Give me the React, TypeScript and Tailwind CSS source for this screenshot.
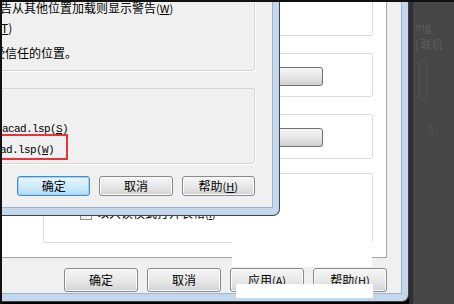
import React from 'react';

const cjk = "font-['Noto_Sans_CJK_SC',sans-serif]";

const Btn: React.FC<{ children: React.ReactNode; def?: boolean; tall?: boolean }> = ({ children, def, tall }) => (
  <div
    className={`flex items-center justify-center w-[74px] ${tall ? 'h-[24px]' : 'h-[20px]'} rounded-[3px] border text-[12px] leading-none text-black ${
      def
        ? 'border-[#3c8fd0] bg-linear-to-b from-[#eaf6fd] via-[#d0ebfa] to-[#b2dcf4] shadow-[inset_0_0_0_1px_#9fd3f2]'
        : 'border-[#8a8a8a] bg-linear-to-b from-[#f5f5f5] via-[#e9e9e9] to-[#d3d3d3] shadow-[inset_0_0_0_1px_#fbfbfb]'
    }`}
  >
    {children}
  </div>
);

const Mn: React.FC<{ k: string }> = ({ k }) => (
  <span className="text-[11px]">
    (<span className="underline">{k}</span>)
  </span>
);

export default function App() {
  return (
    <div className={`relative w-[454px] h-[304px] overflow-hidden bg-black ${cjk}`}>
      {/* desktop behind */}
      <div className="absolute left-[409px] top-0 w-[45px] h-[304px] bg-[#464646] flex">
        <div className="w-[4px] h-full bg-[#2f2f2f]" />
        <div className="flex-1 flex flex-col pl-[2px] pt-[18px] text-[11px] text-[#5e5e5e] leading-[16px]">
          <span>ing</span>
          <span className="mt-[2px]">| 联机</span>
          <div className="mt-[8px] ml-[4px] w-[8px] h-[40px] rounded-[2px] border border-[#525252]" />
          <span className="mt-[22px] ml-[12px] text-[10px]">①</span>
        </div>
      </div>

      {/* back dialog (options) */}
      <div className="absolute left-0 top-0 w-[409px] h-[302px] rounded-br-[7px] bg-[#c4d7ec] border-r border-b border-[#3b4450]">
        <div className="w-[402px] h-[294px] bg-[#f0f0f0] border-r border-b border-[#9fb4ca] flex flex-col">
          <div className="w-[387px] h-[258px] bg-white border-r border-b border-[#a5a5a5] flex flex-col pl-[43px]">
            <div className="-mt-[20px] w-[330px] h-[56px] rounded-[3px] border border-[#dadada]" />
            <div className="mt-[17px] w-[330px] h-[44px] rounded-[3px] border border-[#dadada] flex justify-end pr-[49px] pt-[13px]">
              <div className="w-[150px] h-[19px] rounded-[3px] border border-[#707070] bg-linear-to-b from-[#f5f5f5] via-[#e6e6e6] to-[#d0d0d0]" />
            </div>
            <div className="mt-[17px] w-[330px] h-[45px] rounded-[3px] border border-[#dadada] flex justify-end pr-[49px] pt-[13px]">
              <div className="w-[150px] h-[19px] rounded-[3px] border border-[#707070] bg-linear-to-b from-[#f5f5f5] via-[#e6e6e6] to-[#d0d0d0]" />
            </div>
            <div className="mt-[14px] w-[330px] h-[70px] rounded-[3px] border border-[#dadada] pl-[36px] pt-[34px] flex items-start gap-[5px]">
              <div className="w-[12px] h-[12px] border border-[#8e8f8f] bg-linear-to-br from-[#e6e6e6] to-[#fbfbfb]" />
              <span className="text-[12px] leading-[14px] -mt-[2px]">
                以只读模式打开表格<Mn k="I" />
              </span>
            </div>
          </div>
          <div className="mt-[10px] pl-[64px] flex gap-[9px]">
            <Btn tall>确定</Btn>
            <Btn tall>取消</Btn>
            <Btn tall>
              应用<Mn k="A" />
            </Btn>
            <Btn tall>
              帮助<Mn k="H" />
            </Btn>
          </div>
        </div>
      </div>

      {/* white cover patches */}
      <div className="absolute left-[232px] top-[239px] w-[140px] h-[28px] bg-white" />
      <div className="absolute left-[236px] top-[284px] w-[137px] h-[14px] bg-white" />

      {/* front dialog */}
      <div className="absolute left-0 top-0 w-[280px] h-[216px] rounded-br-[7px] bg-[#c4d7ec] border-r border-b border-[#3b4450]">
        <div className="w-[273px] h-[208px] bg-[#f0f0f0] border-r border-b border-[#9fb4ca] flex flex-col pr-[17px] overflow-hidden">
          <div className="-ml-[10px] -mt-[10px] h-[81px] rounded-[3px] border border-[#d5d5d5] shadow-[1px_1px_0_#ffffff] flex flex-col pt-[10px] text-[12px] leading-[14px]">
            <span className="ml-[9px] whitespace-nowrap">
              告从其他位置加载则显示警告<Mn k="W" />
            </span>
            <span className="mt-[6px] ml-[6px]">
              (<span className="underline">T</span>)
            </span>
            <span className="mt-[11px] ml-[2px] whitespace-nowrap">受信任的位置。</span>
          </div>
          <div className="relative mt-[17px] -ml-[10px] h-[76px] rounded-[3px] border border-[#d5d5d5] shadow-[1px_1px_0_#ffffff] flex flex-col pt-[33px] pl-[11px] font-['Liberation_Mono',monospace] text-[11px] tracking-[-0.6px] leading-[14px]">
            <span>
              acad.lsp(<span className="underline">S</span>)
            </span>
            <span className="mt-[7px] -ml-[2px]">
              ad.lsp(<span className="underline">W</span>)
            </span>
            <div className="absolute left-[7px] top-[45px] w-[70px] h-[26px] border-2 border-solid border-[#e8323e]" />
          </div>
          <div className="mt-[12px] pl-[17px] flex gap-[9px]">
            <Btn def>确定</Btn>
            <Btn>取消</Btn>
            <Btn>
              帮助<Mn k="H" />
            </Btn>
          </div>
        </div>
      </div>

      {/* screen edges */}
      <div className="absolute left-0 top-0 w-[454px] h-[2px] bg-[#111]" />
      <div className="absolute left-0 top-0 w-[2px] h-[304px] bg-[#111]" />
    </div>
  );
}
